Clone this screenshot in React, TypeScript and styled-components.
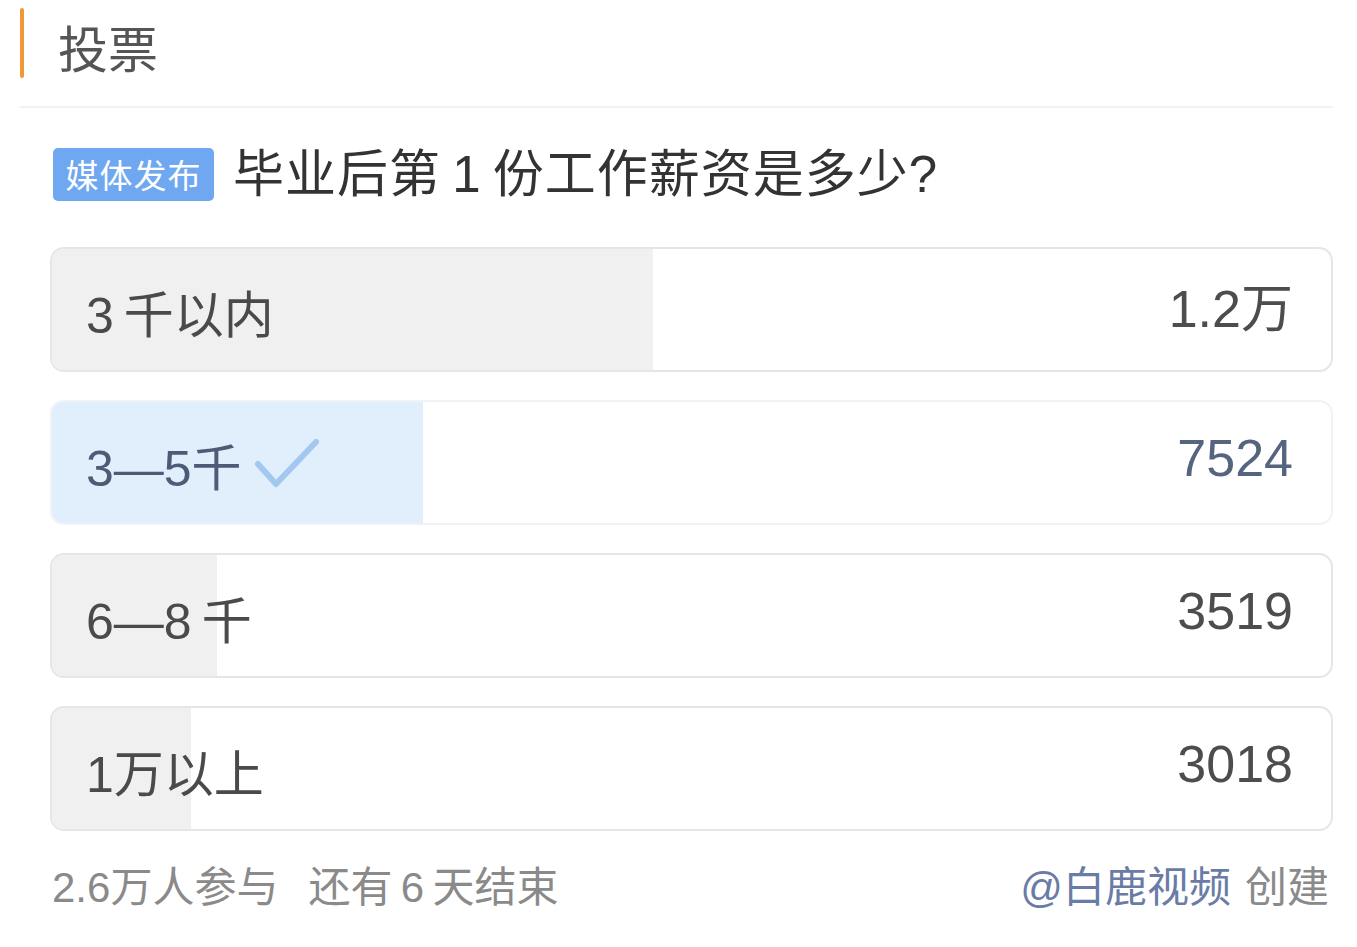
import React from "react";
import styled, { createGlobalStyle } from "styled-components";

const GlobalStyle = createGlobalStyle`
  html, body {
    margin: 0;
    padding: 0;
    background: #ffffff;
  }
  body {
    font-family: "Liberation Sans", "Noto Sans CJK SC", sans-serif;
  }
`;

type Option = {
  label: string;
  count: string;
  percent: number;
  chosen?: boolean;
};

const options: Option[] = [
  { label: "3\u2009千以内", count: "1.2万", percent: 47 },
  { label: "3—5千", count: "7524", percent: 29, chosen: true },
  { label: "6—8\u2009千", count: "3519", percent: 12.9 },
  { label: "1万以上", count: "3018", percent: 10.9 },
];

const Page = styled.div`
  padding: 0 24px 0 20px;
`;

const Header = styled.div`
  height: 106px;
  display: flex;
  align-items: center;
  border-bottom: 2px solid #f2f2f2;
`;

const Accent = styled.span`
  width: 4px;
  height: 70px;
  margin-top: -20px;
  border-radius: 2px;
  background: #f0973a;
`;

const Title = styled.h1`
  margin: -14px 0 0 34px;
  font-size: 50px;
  font-weight: 400;
  color: #555555;
`;

const Question = styled.div`
  display: flex;
  align-items: center;
  gap: 19px;
  margin: 38px 0 0 33px;
  height: 56px;
`;

const Badge = styled.span`
  display: inline-flex;
  align-items: center;
  justify-content: center;
  width: 161px;
  height: 53px;
  border-radius: 5px;
  background: #6fa8f0;
  color: #ffffff;
  font-size: 33px;
  letter-spacing: 1px;
`;

const QuestionText = styled.span`
  font-size: 51px;
  color: #333333;
  line-height: 1;
  letter-spacing: 1px;
`;

const List = styled.div`
  display: flex;
  flex-direction: column;
  gap: 28px;
  margin: 45px 0 0 30px;
`;

const Row = styled.div<{ $chosen?: boolean }>`
  position: relative;
  height: 121px;
  border: 2px solid ${(p) => (p.$chosen ? "#eef3f8" : "#e6e6e6")};
  border-radius: 14px;
  overflow: hidden;
  display: flex;
  align-items: center;
  justify-content: space-between;
  padding: 0 38px 0 34px;
  background: #ffffff;
`;

const Fill = styled.div<{ $chosen?: boolean }>`
  position: absolute;
  left: 0;
  top: 0;
  bottom: 0;
  background: ${(p) => (p.$chosen ? "#e1effc" : "#f0f0f0")};
`;

const Label = styled.span<{ $chosen?: boolean }>`
  position: relative;
  display: flex;
  align-items: center;
  margin-top: 2px;
  font-size: 50px;
  white-space: pre;
  color: ${(p) => (p.$chosen ? "#4d5b77" : "#4a4a4a")};
`;

const Count = styled.span<{ $chosen?: boolean }>`
  position: relative;
  margin-top: -10px;
  font-size: 52px;
  color: ${(p) => (p.$chosen ? "#55647f" : "#4d4d4d")};
`;

const Check = styled.svg`
  margin-left: 12px;
  width: 66px;
  height: 52px;
  margin-top: 0;
`;

const Footer = styled.div`
  display: flex;
  justify-content: space-between;
  align-items: center;
  margin: 22px 4px 0 32px;
  font-size: 42px;
  color: #8a8a8a;
  white-space: pre;
`;

const Stats = styled.div`
  display: flex;
  gap: 30px;
`;

const Creator = styled.div`
  color: #8a8a8a;
`;

const Author = styled.span`
  color: #6a7ca6;
  margin-right: 14px;
`;

const CheckMark = () => (
  <Check viewBox="0 0 66 52">
    <polyline
      points="4,26 22,46 62,4"
      fill="none"
      stroke="#a3c8f0"
      strokeWidth="6"
      strokeLinecap="round"
      strokeLinejoin="round"
    />
  </Check>
);

export default function App() {
  return (
    <Page>
      <GlobalStyle />
      <Header>
        <Accent />
        <Title>投票</Title>
      </Header>
      <Question>
        <Badge>媒体发布</Badge>
        <QuestionText>毕业后第{"\u2009"}1{"\u2009"}份工作薪资是多少?</QuestionText>
      </Question>
      <List>
        {options.map((o) => (
          <Row key={o.label} $chosen={o.chosen}>
            <Fill $chosen={o.chosen} style={{ width: `${o.percent}%` }} />
            <Label $chosen={o.chosen}>
              {o.label}
              {o.chosen && <CheckMark />}
            </Label>
            <Count $chosen={o.chosen}>{o.count}</Count>
          </Row>
        ))}
      </List>
      <Footer>
        <Stats>
          <span>2.6万人参与</span>
          <span>还有{"\u2009"}6{"\u2009"}天结束</span>
        </Stats>
        <Creator>
          <Author>@白鹿视频</Author>创建
        </Creator>
      </Footer>
    </Page>
  );
}
